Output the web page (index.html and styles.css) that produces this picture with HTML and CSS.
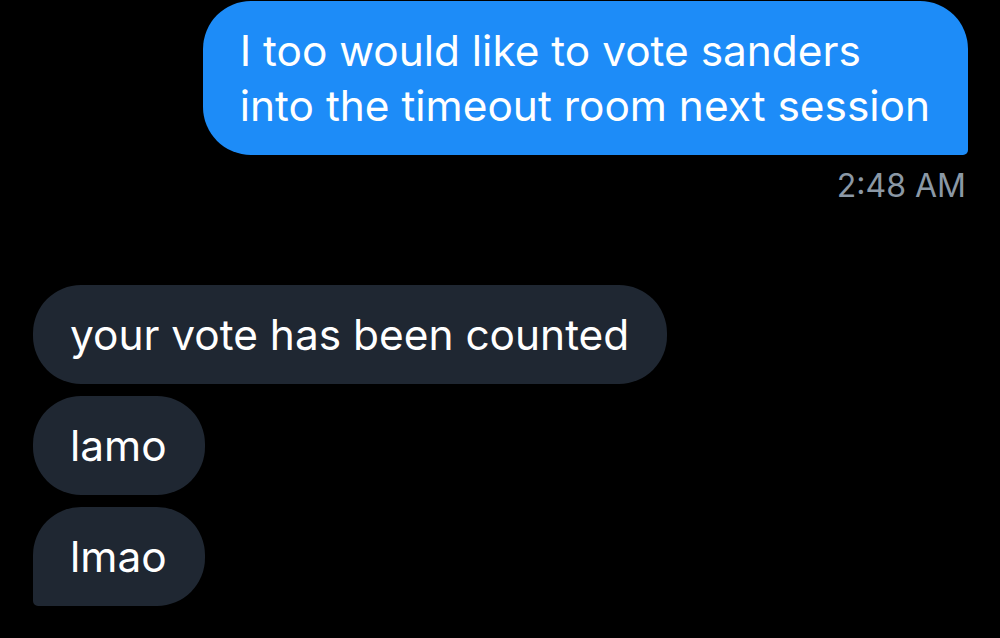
FILE: index.html
```html
<!DOCTYPE html>
<html lang="en">
<head>
	<title>Messages</title>
	<meta charset="utf-8">
	<link rel="stylesheet" href="styles.css">
</head>
<body>

<!-- conversation -->
<div class="chat">

	<div class="group group-sent">
		<div class="bubble bubble-sent">I too would like to vote sanders<br>into the timeout room next session</div>
		<div class="stamp">2:48 AM</div>
	</div>

	<div class="group group-recv">
		<div class="bubble bubble-recv">your vote has been counted</div>
		<div class="bubble bubble-recv">lamo</div>
		<div class="bubble bubble-recv bubble-last">lmao</div>
	</div>

</div>
<!-- //conversation -->

</body>
</html>
```

FILE: styles.css
```css
*{padding: 0; margin: 0; box-sizing: border-box;}
html, body {background: #000;}
body {width: 1000px; height: 638px; overflow: hidden; font-family: "Inter", "Noto Sans", sans-serif; color: #e7e9ea;}

.chat {display: flex; flex-direction: column; padding: 1px 32px 0 33px;}

.group {display: flex; flex-direction: column;}
.group-sent {align-items: flex-end;}
.group-recv {align-items: flex-start; margin-top: 80px; gap: 12px;}

.bubble {font-size: 42.4px; line-height: 55px; padding: 22px 38px 22px 37px; border-radius: 48px;}
.bubble-sent {background: #1d8cf8; color: #fff; border-bottom-right-radius: 5px;}
.bubble-recv {background: #1f2732; color: #fff;}
.bubble-last {border-bottom-left-radius: 5px;}

.stamp {font-size: 32px; line-height: 38px; color: #8b98a5; margin-top: 12px; margin-right: 2px;}
```
